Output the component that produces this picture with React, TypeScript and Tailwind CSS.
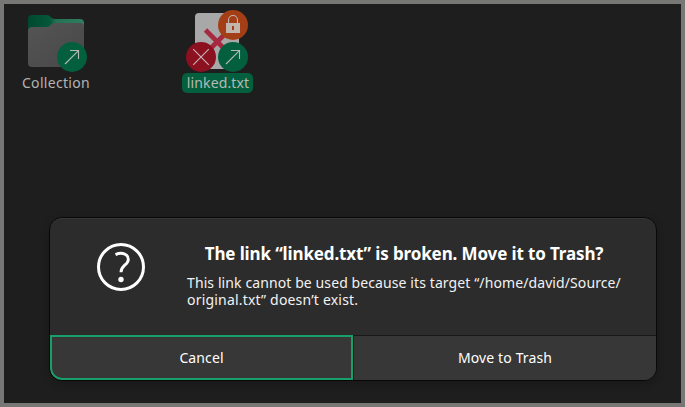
import React from "react";

function LinkBadge() {
  return (
    <svg viewBox="0 0 30 30" className="h-[30px] w-[30px]">
      <circle cx="15" cy="15" r="15" fill="#045f3f" />
      <path d="M8 22 21.2 8.8M13 8.5h8.5V17" fill="none" stroke="#b4bab5" strokeWidth="1.1" />
    </svg>
  );
}

function BrokenBadge() {
  return (
    <svg viewBox="0 0 30 30" className="h-[30px] w-[30px]">
      <circle cx="15" cy="15" r="15" fill="#8b1020" />
      <path d="M7.2 7.2 22.8 22.8M22.8 7.2 7.2 22.8" fill="none" stroke="#c7b4b7" strokeWidth="1.1" />
    </svg>
  );
}

function LockBadge() {
  return (
    <svg viewBox="0 0 30 30" className="h-[30px] w-[30px]">
      <circle cx="15" cy="15" r="15" fill="#a43e16" />
      <path d="M10.5 13.5V10a4.5 4.5 0 0 1 9 0v3.5" fill="none" stroke="#c2b5ae" strokeWidth="1.1" />
      <path fillRule="evenodd" d="M8 13h14v10H8zM14 16v4h2v-4z" fill="#c2b5ae" />
    </svg>
  );
}

function Folder() {
  return (
    <svg viewBox="0 0 56 52" className="h-[52px] w-14">
      <defs>
        <linearGradient id="back" x1="0" y1="0" x2="1" y2="0">
          <stop offset="0" stopColor="#00482f" />
          <stop offset=".4" stopColor="#05583b" />
          <stop offset=".5" stopColor="#237253" />
          <stop offset="1" stopColor="#317c60" />
        </linearGradient>
        <linearGradient id="front" x1="0" y1="0" x2="1" y2="1">
          <stop offset="0" stopColor="#545454" />
          <stop offset="1" stopColor="#484848" />
        </linearGradient>
      </defs>
      <path d="M0 4Q0 0 4 0H19Q21 0 22.3 1.5L24 3.3Q25 4 27 4H52Q56 4 56 8V30H0Z" fill="url(#back)" />
      <path d="M0 16Q0 12 4 12H18.5Q20.5 12 22 10.5L23.5 9Q25 8 27 8H52Q56 8 56 12V48Q56 52 52 52H4Q0 52 0 48Z" fill="url(#front)" />
    </svg>
  );
}

function BrokenFile() {
  return (
    <svg viewBox="0 0 44 56" className="h-14 w-11">
      <rect width="44" height="56" rx="4" fill="#a8a8a8" />
      <path d="M10.5 17 34 40.5M37 14 10 41" stroke="#a72940" strokeWidth="4.6" />
    </svg>
  );
}

function Question() {
  return (
    <svg viewBox="0 0 48 48" className="h-12 w-12">
      <circle cx="24" cy="24" r="22.5" fill="none" stroke="#fff" strokeWidth="3" />
      <path d="M18.5 11.6C24.8 8.8 31.3 10.8 31.3 16.4C31.3 22.2 24 21.8 24 29.3" fill="none" stroke="#fff" strokeWidth="2.9" />
      <circle cx="24" cy="36.5" r="2.7" fill="#fff" />
    </svg>
  );
}

export default function App() {
  return (
    <div className="flex h-[407px] w-[685px] flex-col overflow-hidden border-4 border-[#777776] bg-[#1e1e1e] font-['Noto_Sans',sans-serif] text-[14px] leading-[17px] text-white">
      <div className="flex h-[213px] shrink-0 pl-4 pt-[9px]">
        <div className="flex w-[72px] shrink-0 flex-col items-center">
          <div className="relative flex h-[59px] w-14 items-end pb-[5px]">
            <Folder />
            <div className="absolute left-[29px] top-[29px]"><LinkBadge /></div>
          </div>
          <div className="mt-[2px] whitespace-nowrap tracking-[0.32px] text-[#b4b4b4]">Collection</div>
        </div>
        <div className="ml-[90px] flex w-[71px] shrink-0 flex-col items-start">
          <div className="relative ml-[13px] h-14 w-11">
            <BrokenFile />
            <div className="absolute left-[-9px] top-[29px]"><BrokenBadge /></div>
            <div className="absolute left-[23px] top-[-3px]"><LockBadge /></div>
            <div className="absolute left-[23px] top-[29px]"><LinkBadge /></div>
          </div>
          <div className="mt-1 flex h-5 w-[71px] items-start justify-center whitespace-nowrap rounded-[5px] bg-[#045f3f] pl-px pt-px tracking-[0.15px] text-[#b4bab5]">linked.txt</div>
        </div>
      </div>
      <div role="dialog" className="ml-[45px] flex h-[164px] w-[608px] shrink-0 flex-col overflow-hidden rounded-[13px] border border-[#080808] bg-[#2c2c2c] shadow-[0_3px_8px_rgba(0,0,0,0.2)]">
        <div className="flex h-[117px] shrink-0 rounded-t-[12px] border-t border-[#383838] pl-[47px]">
          <div className="pt-6"><Question /></div>
          <div className="ml-[42px] w-[434px] pt-[23px]">
            <h1 className="flex h-[22px] items-center justify-center whitespace-nowrap text-[17px] font-bold tracking-[-0.13px]">The link “linked.txt” is broken. Move it to Trash?</h1>
            <p className="mt-[10px] whitespace-nowrap text-[#f2f2f2]">
              <span className="block h-[17px] tracking-[0.1px]">This link cannot be used because its target “/home/david/Source/</span>
              <span className="block h-[17px] tracking-[0.19px]">original.txt” doesn’t exist.</span>
            </p>
          </div>
        </div>
        <div className="flex h-[45px] shrink-0">
          <button className="w-[303px] rounded-bl-[12px] border-2 border-[#18a06c] bg-[#373737] tracking-[0.1px]">Cancel</button>
          <button className="flex-1 border-l border-t border-[#181818] bg-[#373737] pb-[2px] tracking-[0.13px]">Move to Trash</button>
        </div>
      </div>
    </div>
  );
}
